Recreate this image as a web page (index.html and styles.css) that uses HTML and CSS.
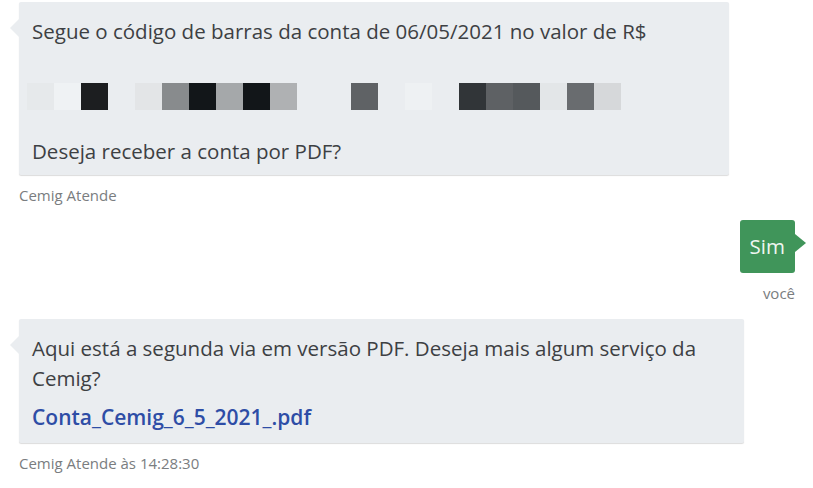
FILE: index.html
```html
<!DOCTYPE html>
<html lang="pt-BR">
<head>
  <meta charset="UTF-8" />
  <title>Cemig Atende</title>
  <link rel="stylesheet" href="styles.css">
</head>
<body>
  <div class="chat">
    <div class="msg bot">
      <div class="bubble first">
        <p>Segue o código de barras da conta de 06/05/2021 no valor de R$</p>
        <div class="barcode">
          <span class="cell" style="background:#e6e9eb"></span>
          <span class="cell" style="background:#eff2f4"></span>
          <span class="cell" style="background:#1c1e20"></span>
          <span class="cell"></span>
          <span class="cell" style="background:#e3e5e7"></span>
          <span class="cell" style="background:#888b8d"></span>
          <span class="cell" style="background:#121619"></span>
          <span class="cell" style="background:#a5a8aa"></span>
          <span class="cell" style="background:#121619"></span>
          <span class="cell" style="background:#afb1b3"></span>
          <span class="cell"></span>
          <span class="cell"></span>
          <span class="cell" style="background:#5f6265"></span>
          <span class="cell"></span>
          <span class="cell" style="background:#eef1f3"></span>
          <span class="cell"></span>
          <span class="cell" style="background:#313538"></span>
          <span class="cell" style="background:#5e6164"></span>
          <span class="cell" style="background:#55595c"></span>
          <span class="cell" style="background:#e3e6e8"></span>
          <span class="cell" style="background:#696c6f"></span>
          <span class="cell" style="background:#d6d8da"></span>
        </div>
        <p class="question">Deseja receber a conta por PDF?</p>
      </div>
      <div class="meta">Cemig Atende</div>
    </div>

    <div class="msg user">
      <div class="bubble">Sim</div>
      <div class="meta">você</div>
    </div>

    <div class="msg bot">
      <div class="bubble second">
        <p>Aqui está a segunda via em versão PDF. Deseja mais algum serviço da Cemig?</p>
        <a class="file" href="#">Conta_Cemig_6_5_2021_.pdf</a>
      </div>
      <div class="meta">Cemig Atende às 14:28:30</div>
    </div>
  </div>
</body>
</html>
```

FILE: styles.css
```css
body {
  margin: 0;
  background: #ffffff;
  font-family: 'Open Sans', sans-serif;
  color: #3d4043;
}
.chat {
  display: flex;
  flex-direction: column;
  padding: 2px 18px 0 19px;
}
.msg {
  display: flex;
  flex-direction: column;
}
.msg.user {
  align-items: flex-end;
  margin-top: 15px;
}
.msg.user + .msg.bot {
  margin-top: 16px;
}
.bubble {
  position: relative;
  background: #eaedf0;
  border-radius: 2px;
  box-shadow: 0 1px 1px rgba(0, 0, 0, 0.14);
  font-size: 20.5px;
  line-height: 30px;
  padding: 14px 13px 9px;
  box-sizing: border-box;
}
.bubble p {
  margin: 0;
}
.bot .bubble::before {
  content: '';
  position: absolute;
  left: -9px;
  top: 17px;
  border-top: 9px solid transparent;
  border-bottom: 9px solid transparent;
  border-right: 9px solid #eaedf0;
}
.bubble.first {
  width: 710px;
}
.bubble.second {
  width: 725px;
  padding-bottom: 11px;
}
.barcode {
  display: flex;
  margin: 37px 0 0 -5px;
}
.cell {
  width: 27px;
  height: 27px;
}
.question {
  margin-top: 26px !important;
}
.file {
  display: block;
  margin-top: 9px;
  color: #2e4da6;
  font-size: 21px;
  font-weight: 600;
  text-decoration: none;
}
.user .bubble {
  background: #40955a;
  color: #eef6f0;
  padding: 11px 10px 12px;
  border-radius: 3px;
  box-shadow: none;
}
.user .bubble::after {
  content: '';
  position: absolute;
  right: -11px;
  top: 14px;
  border-top: 9px solid transparent;
  border-bottom: 9px solid transparent;
  border-left: 11px solid #40955a;
}
.meta {
  margin-top: 10px;
  font-size: 15px;
  line-height: 20px;
  color: #7a7d80;
}
```
